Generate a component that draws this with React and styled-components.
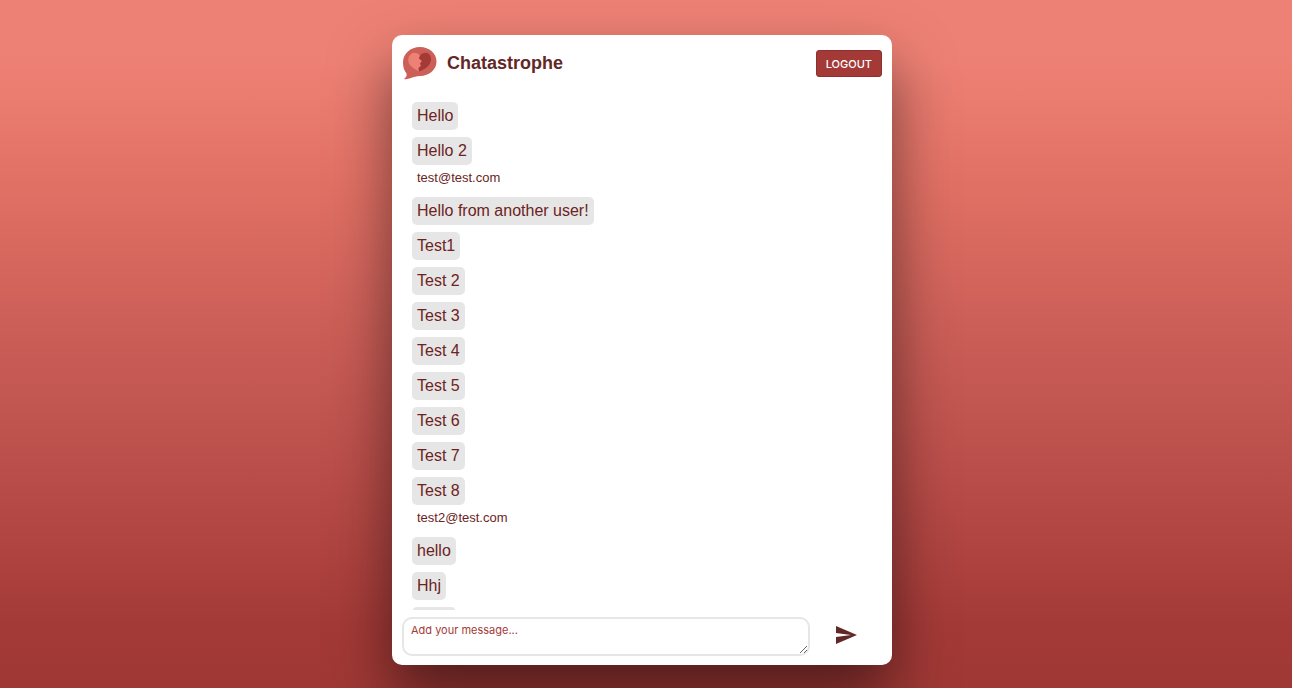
import React from "react";
import styled, { createGlobalStyle } from "styled-components";

const colors = {
  ink: "#622826",
  text: "#6c2321",
  brick: "#a43a37",
  rose: "#cc5f58",
  coral: "#ee8175",
  line: "#e6e6e6",
};

const GlobalStyle = createGlobalStyle`
  * { box-sizing: border-box; }
  body {
    margin: 0;
    color: ${colors.text};
    font-family: "Liberation Sans", Arial, Helvetica, sans-serif;
  }
`;

const Page = styled.div`
  display: flex;
  flex-direction: column;
  align-items: center;
  height: 100vh;
  padding: 35px 8px 23px 0;
  overflow: hidden;
  background: linear-gradient(
    #ee8175 0%,
    #ee8175 8%,
    #e27165 26%,
    #cc5f58 47%,
    #ba4e4a 68%,
    #a43a37 91%,
    #9f3835 100%
  );
`;

const Card = styled.main`
  display: flex;
  flex: 1;
  flex-direction: column;
  width: 100%;
  max-width: 500px;
  min-height: 0;
  padding: 10px 10px 9px;
  border-radius: 10px;
  background: #fff;
  box-shadow: 0 30px 60px rgba(0, 0, 0, 0.5);
`;

const Header = styled.header`
  display: flex;
  align-items: center;
  height: 36px;
`;

const Title = styled.h1`
  flex: 1;
  margin: 0 0 0 10px;
  color: ${colors.ink};
  font-size: 18px;
  line-height: 20px;
`;

const LogoutButton = styled.button`
  height: 27px;
  padding: 2px 9px 0;
  border: 1px solid #8f302e;
  border-radius: 3px;
  background: ${colors.brick};
  color: #fff;
  font: 500 11px/16px Inter, sans-serif;
  cursor: pointer;
`;

const MessageList = styled.ul`
  flex: 1;
  min-height: 0;
  margin: 14px 0 7px;
  padding: 7px 10px;
  overflow-y: auto;
  list-style: none;
  scrollbar-width: none;
`;

const Message = styled.li`
  margin-bottom: 7px;
`;

const Bubble = styled.p`
  width: fit-content;
  margin: 0;
  padding: 5px;
  border-radius: 5px;
  background: ${colors.line};
  font-size: 16px;
  line-height: 18px;
`;

const Author = styled.p`
  margin: 0;
  padding: 5px 5px 4px;
  font-size: 13px;
  line-height: 16px;
`;

const Composer = styled.form`
  display: flex;
  align-items: flex-start;
`;

const MessageInput = styled.textarea`
  flex: 1;
  height: 39px;
  padding: 4px 7px;
  border: 2px solid ${colors.line};
  border-radius: 10px;
  color: ${colors.ink};
  font: 11px/14px Inter, sans-serif;
  resize: vertical;

  &::placeholder {
    color: ${colors.brick};
    opacity: 1;
  }
`;

const SendButton = styled.button`
  display: flex;
  align-items: center;
  justify-content: center;
  width: 72px;
  height: 36px;
  padding: 0;
  border: 0;
  background: none;
  color: ${colors.ink};
  cursor: pointer;
`;

const Logo = () => (
  <svg width="35" height="36" viewBox="0 0 35 36" aria-hidden="true">
    <path
      d="M18 2C27.500 2 34.500 8.500 34.500 16.500S27.500 31 18 31C14.500 31 11.500 32 9 33C6.500 34 4 34.500 2 34C4 32.500 5 31 4.500 28.500C2 25.500 1 21.500 1 17.500C1 8.500 8.500 2 18 2Z"
      fill={colors.rose}
    />
    <path
      d="M18 10.500C15.500 7.500 11.500 7 9 9C5.500 12 5.500 17 8 20C10.500 23 14 25 17 26.500L16.500 23L19 21L18 18.500L20 16L17 13.500Z"
      fill={colors.coral}
    />
    <path
      d="M18 10.500C20.500 7.500 24.500 7 27 9C30 12 29.500 17 27 20C24.500 23 20.500 25.500 17 26.500L16.500 23L19 21L18 18.500L20 16L17 13.500Z"
      fill={colors.brick}
    />
  </svg>
);

const SendIcon = () => (
  <svg width="24" height="24" viewBox="0 0 24 24" aria-hidden="true">
    <path d="M2 3L23 12L2 21V14L17 12L2 10Z" fill="currentColor" />
  </svg>
);

const messages = [
  { text: "Hello" },
  { text: "Hello 2", author: "test@test.com" },
  { text: "Hello from another user!" },
  { text: "Test1" },
  { text: "Test 2" },
  { text: "Test 3" },
  { text: "Test 4" },
  { text: "Test 5" },
  { text: "Test 6" },
  { text: "Test 7" },
  { text: "Test 8", author: "test2@test.com" },
  { text: "hello" },
  { text: "Hhj" },
  { text: "hello" },
];

export default function App() {
  return (
    <>
      <GlobalStyle />
      <Page>
        <Card>
          <Header>
            <Logo />
            <Title>Chatastrophe</Title>
            <LogoutButton type="button">LOGOUT</LogoutButton>
          </Header>
          <MessageList>
            {messages.map(({ text, author }, index) => (
              <Message key={index}>
                <Bubble>{text}</Bubble>
                {author && <Author>{author}</Author>}
              </Message>
            ))}
          </MessageList>
          <Composer onSubmit={(event) => event.preventDefault()}>
            <MessageInput aria-label="Message" placeholder="Add your message..." />
            <SendButton type="submit" aria-label="Send message">
              <SendIcon />
            </SendButton>
          </Composer>
        </Card>
      </Page>
    </>
  );
}
